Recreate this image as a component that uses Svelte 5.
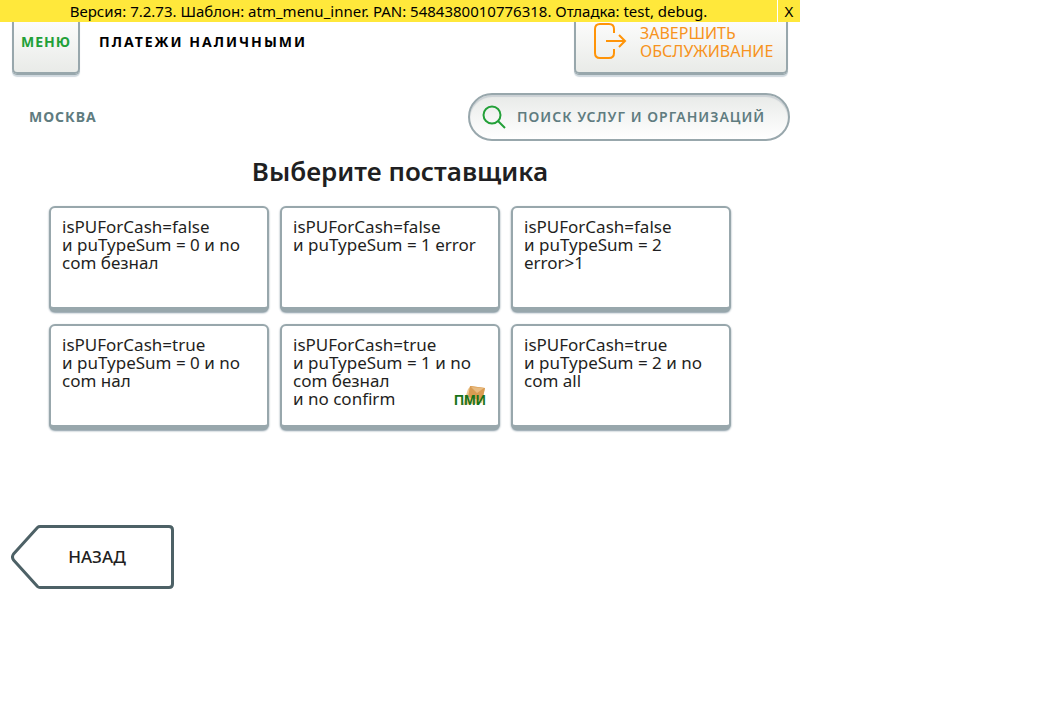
<script>
  const providers = [
    { lines: ['isPUForCash=false', 'и puTypeSum = 0 и no', 'com безнал'] },
    { lines: ['isPUForCash=false', 'и puTypeSum = 1 error'] },
    { lines: ['isPUForCash=false', 'и puTypeSum = 2', 'error>1'] },
    { lines: ['isPUForCash=true', 'и puTypeSum = 0 и no', 'com нал'] },
    { lines: ['isPUForCash=true', 'и puTypeSum = 1 и no', 'com безнал', 'и no confirm'], logo: 'ПМИ' },
    { lines: ['isPUForCash=true', 'и puTypeSum = 2 и no', 'com all'] }
  ];
  let debugOpen = $state(true);
</script>

<div class="screen">
  {#if debugOpen}
    <div class="debug">
      <p>Версия: 7.2.73. Шаблон: atm_menu_inner. PAN: 5484380010776318. Отладка: test, debug.</p>
      <button type="button" onclick={() => (debugOpen = false)}>X</button>
    </div>
  {/if}

  <header>
    <button type="button" class="raised menu">МЕНЮ</button>
    <h2>ПЛАТЕЖИ НАЛИЧНЫМИ</h2>
    <button type="button" class="raised exit">
      <svg width="34" height="38" viewBox="0 0 34 38" fill="none" stroke="#ff9408" stroke-width="2" aria-hidden="true">
        <path d="M20 10V6Q20 1 15 1H6Q1 1 1 6V30Q1 35 6 35H15Q20 35 20 30V26" />
        <path d="M12 18H31M25 12L31 18L25 24" />
      </svg>
      <span>ЗАВЕРШИТЬ<br />ОБСЛУЖИВАНИЕ</span>
    </button>
  </header>

  <div class="tools">
    <button type="button" class="region">МОСКВА</button>
    <button type="button" class="search">
      <svg width="24" height="24" viewBox="0 0 24 24" fill="none" stroke="#22a038" stroke-width="2" aria-hidden="true">
        <circle cx="10" cy="10" r="8.500" />
        <path d="M16 16L23 23" />
      </svg>
      <span>ПОИСК УСЛУГ И ОРГАНИЗАЦИЙ</span>
    </button>
  </div>

  <main>
    <h1>Выберите поставщика</h1>
    <div class="providers">
      {#each providers as provider}
        <button type="button" class="card">
          <span>{#each provider.lines as line, i}{#if i}<br />{/if}{line}{/each}</span>
          {#if provider.logo}
            <svg class="logo" width="34" height="24" viewBox="0 0 34 24" aria-hidden="true">
              <path d="M15 4L18 1L32 3L29 18L10 20Z" fill="#edc891" />
              <path d="M17 1L32 3L29 16L15 12Z" fill="#d99b52" />
              <path d="M18 2L24 8L31 3Z" fill="#e8bb80" />
              <text x="1" y="20">{provider.logo}</text>
            </svg>
          {/if}
        </button>
      {/each}
    </div>
  </main>

  <footer>
    <button type="button" class="back">
      <svg width="164" height="64" viewBox="0 0 164 64" aria-hidden="true">
        <path d="M29 1.500H158Q161.500 1.500 161.500 5V59Q161.500 62.500 158 62.500H29Q27.500 62.500 26.500 61.500L2.500 35Q.5 32 2.500 29L26.500 2.500Q27.500 1.500 29 1.500Z" fill="#fff" stroke="#4d6166" stroke-width="3" stroke-linejoin="round" />
      </svg>
      <span>НАЗАД</span>
    </button>
  </footer>
</div>

<style>
  :global(body) {
    margin: 0;
    background: #fff;
  }
  .screen {
    position: relative;
    max-width: 800px;
    color: #1f1f22;
    font-family: "Noto Sans", "Open Sans", sans-serif;
    font-size: 17px;
    line-height: 18px;
  }
  button {
    box-sizing: border-box;
    margin: 0;
    padding: 0;
    border: 0;
    background: none;
    color: inherit;
    font: inherit;
    cursor: pointer;
  }
  h1, h2, p {
    margin: 0;
  }
  .debug {
    position: absolute;
    inset: 0 0 auto;
    z-index: 1;
    display: flex;
    background: #ffe83b;
    color: #000;
    font-size: 15px;
    line-height: 22px;
  }
  .debug p {
    flex: 1;
    text-align: center;
  }
  .debug button {
    width: 23px;
    border-left: 1px solid #fff;
  }
  header {
    display: flex;
    align-items: center;
    padding: 10px 12px 0;
  }
  .raised {
    height: 64px;
    border: 2px solid #98a7ac;
    border-radius: 5px;
    background: linear-gradient(#fff, #e9ebe8);
    box-shadow: 0 1px 0 #98a7ac, 0 3px 1px #cfd8de;
  }
  .menu {
    width: 68px;
    color: #22a038;
    font-size: 14px;
    font-weight: 700;
    letter-spacing: 1px;
  }
  h2 {
    flex: 1;
    padding-left: 19px;
    color: #000;
    font-size: 14px;
    font-weight: 700;
    letter-spacing: 2px;
  }
  .exit {
    display: flex;
    align-items: center;
    gap: 12px;
    width: 214px;
    padding-left: 18px;
    color: #f79320;
    font-size: 16px;
    text-align: left;
  }
  .exit svg, .search svg {
    flex: none;
  }
  .tools {
    display: flex;
    align-items: center;
    justify-content: space-between;
    padding: 19px 10px 0 29px;
    color: #5f7c80;
    font-size: 14px;
  }
  .region {
    font-weight: 700;
    letter-spacing: 1px;
  }
  .search {
    display: flex;
    align-items: center;
    gap: 11px;
    width: 322px;
    height: 48px;
    padding-left: 12px;
    border: 2px solid #98a7ac;
    border-radius: 24px;
    background: linear-gradient(#e8eae8, #fff);
    box-shadow: inset 0 2px 1px #cbd1d5;
    font-weight: 600;
    letter-spacing: 1px;
    white-space: nowrap;
  }
  h1 {
    padding-top: 13px;
    font-size: 26px;
    font-weight: 600;
    line-height: 34px;
    text-align: center;
  }
  .providers {
    display: grid;
    grid-template-columns: repeat(3, 1fr);
    gap: 12px 11px;
    padding: 18px 69px 0 49px;
  }
  .card {
    display: flex;
    align-items: flex-start;
    position: relative;
    height: 106px;
    padding: 10px 11px;
    border: 2px solid #98a7ac;
    border-bottom-width: 5px;
    border-radius: 6px;
    background: #fff;
    box-shadow: 0 1px 2px #8799a3;
    text-align: left;
  }
  .logo {
    position: absolute;
    right: 11px;
    bottom: 16px;
  }
  .logo text {
    fill: #187318;
    font-family: "Liberation Sans", sans-serif;
    font-size: 14px;
    font-weight: 700;
  }
  footer {
    padding: 95px 11px 0;
  }
  .back {
    display: grid;
    place-items: center;
    font-weight: 500;
  }
  .back svg, .back span {
    grid-area: 1 / 1;
  }
  .back span {
    padding-left: 8px;
  }
</style>
